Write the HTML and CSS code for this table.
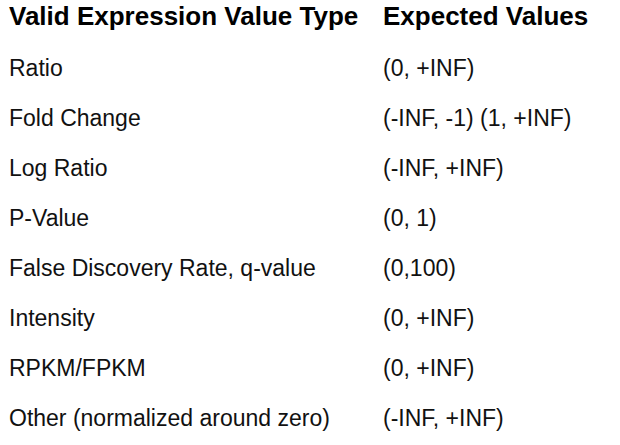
FILE: index.html
```html
<!DOCTYPE html>
<html lang="en">
<head>
<meta charset="utf-8">
<title>Valid Expression Value Types</title>
<link rel="stylesheet" href="styles.css">
</head>
<body>
<div class="table">
  <div class="row head">
    <div class="cell">Valid Expression Value Type</div>
    <div class="cell">Expected Values</div>
  </div>
  <div class="row"><div class="cell">Ratio</div><div class="cell">(0, +INF)</div></div>
  <div class="row"><div class="cell">Fold Change</div><div class="cell">(-INF, -1) (1, +INF)</div></div>
  <div class="row"><div class="cell">Log Ratio</div><div class="cell">(-INF, +INF)</div></div>
  <div class="row"><div class="cell">P-Value</div><div class="cell">(0, 1)</div></div>
  <div class="row"><div class="cell">False Discovery Rate, q-value</div><div class="cell">(0,100)</div></div>
  <div class="row"><div class="cell">Intensity</div><div class="cell">(0, +INF)</div></div>
  <div class="row"><div class="cell">RPKM/FPKM</div><div class="cell">(0, +INF)</div></div>
  <div class="row"><div class="cell">Other (normalized around zero)</div><div class="cell">(-INF, +INF)</div></div>
</div>
</body>
</html>
```

FILE: styles.css
```css
html, body {
  margin: 0;
  padding: 0;
  background: #ffffff;
}

body {
  font-family: "Liberation Sans", Arial, sans-serif;
  color: #111111;
}

.table {
  display: flex;
  flex-direction: column;
  padding-left: 9px;
}

.row {
  display: grid;
  grid-template-columns: 374px 1fr;
  height: 50px;
  line-height: 50px;
  font-size: 23px;
  white-space: nowrap;
}

.row.head {
  height: 43px;
  line-height: 32px;
  font-size: 26px;
  font-weight: bold;
  color: #000000;
}
```
